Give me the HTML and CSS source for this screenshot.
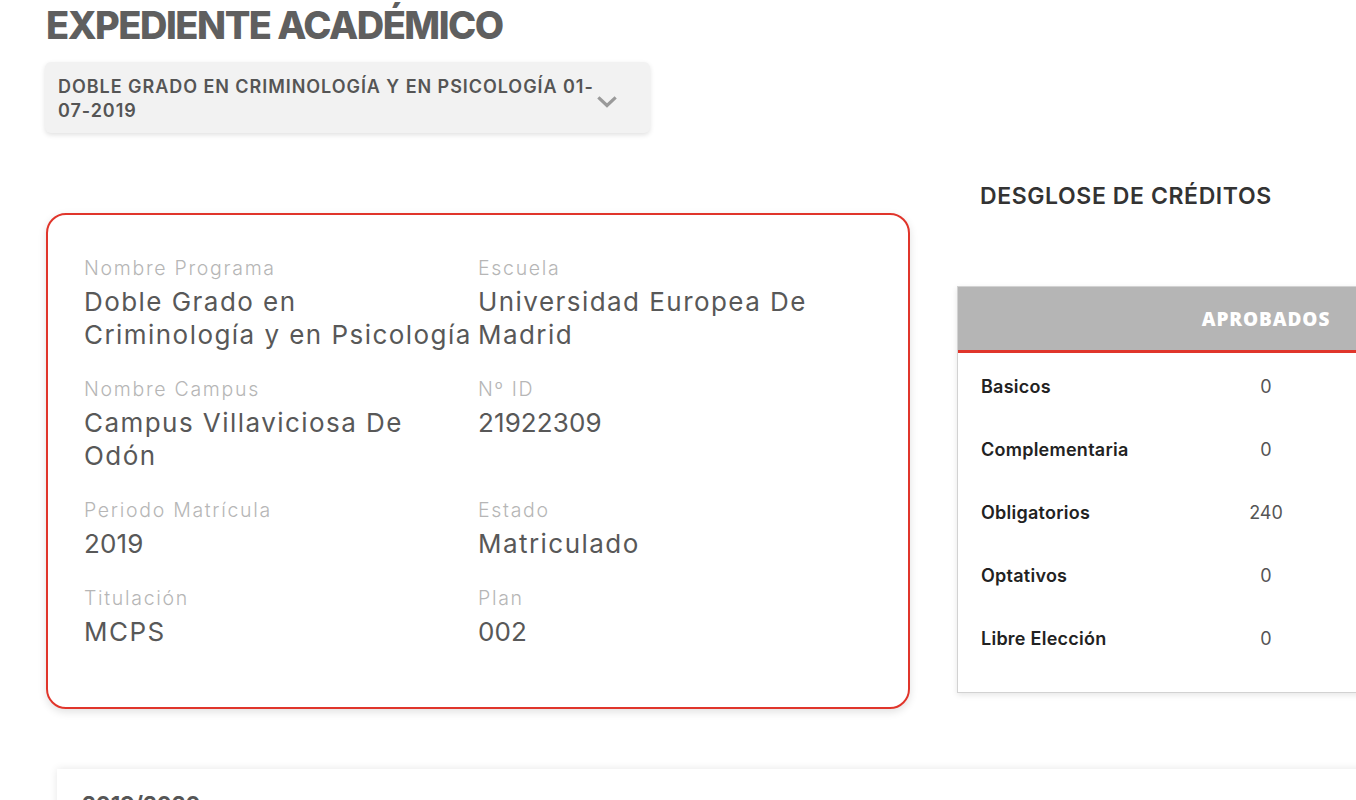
FILE: index.html
```html
<!DOCTYPE html>
<html lang="es">
<head>
<meta charset="utf-8">
<title>Expediente Académico</title>
<link rel="stylesheet" href="styles.css">
</head>
<body>
<main class="page">
  <h1 class="title">EXPEDIENTE ACADÉMICO</h1>
  <div class="select">
    <span class="select-text">DOBLE GRADO EN CRIMINOLOGÍA Y EN PSICOLOGÍA 01-07-2019</span>
    <svg class="chevron" width="20" height="12" viewBox="0 0 20 12" aria-hidden="true">
      <path d="M2.5 2.5 L10 9.5 L17.5 2.5" fill="none" stroke="#9a9a9a" stroke-width="3.2" stroke-linecap="square"/>
    </svg>
  </div>

  <div class="layout">
    <section class="info-card">
      <div class="field">
        <div class="label">Nombre Programa</div>
        <div class="value">Doble Grado en Criminología y en Psicología</div>
      </div>
      <div class="field">
        <div class="label">Escuela</div>
        <div class="value">Universidad Europea De Madrid</div>
      </div>
      <div class="field">
        <div class="label">Nombre Campus</div>
        <div class="value">Campus Villaviciosa De Odón</div>
      </div>
      <div class="field">
        <div class="label">Nº ID</div>
        <div class="value num">21922309</div>
      </div>
      <div class="field">
        <div class="label">Periodo Matrícula</div>
        <div class="value num">2019</div>
      </div>
      <div class="field">
        <div class="label">Estado</div>
        <div class="value">Matriculado</div>
      </div>
      <div class="field">
        <div class="label">Titulación</div>
        <div class="value">MCPS</div>
      </div>
      <div class="field">
        <div class="label">Plan</div>
        <div class="value num">002</div>
      </div>
    </section>

    <aside class="credits">
      <h2 class="credits-title">DESGLOSE DE CRÉDITOS</h2>
      <div class="credits-table">
        <div class="ct-head">
          <span class="ct-name"></span>
          <span class="ct-val">APROBADOS</span>
          <span class="ct-rest"></span>
        </div>
        <div class="ct-body">
          <div class="ct-row"><span class="ct-name">Basicos</span><span class="ct-val">0</span><span class="ct-rest"></span></div>
          <div class="ct-row"><span class="ct-name">Complementaria</span><span class="ct-val">0</span><span class="ct-rest"></span></div>
          <div class="ct-row"><span class="ct-name">Obligatorios</span><span class="ct-val">240</span><span class="ct-rest"></span></div>
          <div class="ct-row"><span class="ct-name">Optativos</span><span class="ct-val">0</span><span class="ct-rest"></span></div>
          <div class="ct-row"><span class="ct-name">Libre Elección</span><span class="ct-val">0</span><span class="ct-rest"></span></div>
        </div>
      </div>
    </aside>
  </div>

  <section class="year-card">
    <h3 class="year-title">2019/2020</h3>
  </section>
</main>
</body>
</html>
```
FILE: styles.css
```css
html, body {
  margin: 0;
  padding: 0;
  overflow: hidden;
  background: #ffffff;
}

body {
  font-family: "Inter", "Noto Sans", sans-serif;
  color: #555555;
}

.page {
  padding: 0 0 0 46px;
  width: 1400px;
}

.title {
  margin: 0;
  padding-top: 3px;
  font-family: "Inter", sans-serif;
  font-weight: 800;
  font-size: 38px;
  line-height: 44px;
  color: #5f5f5f;
  letter-spacing: -1.5px;
}

.select {
  margin: 15px 0 0 -1px;
  width: 605px;
  box-sizing: border-box;
  min-height: 71px;
  padding: 13px 35px 10px 13px;
  background: #f2f2f2;
  border-radius: 6px;
  box-shadow: 0 2px 5px rgba(0, 0, 0, 0.12);
  display: flex;
  align-items: flex-start;
}

.select-text {
  flex: 1;
  font-weight: 600;
  font-size: 18px;
  line-height: 24px;
  letter-spacing: 0.95px;
  color: #555555;
}

.chevron {
  flex: none;
  margin-top: 21px;
  margin-left: -6px;
  margin-right: -2px;
}

.layout {
  display: grid;
  grid-template-columns: 864px 1fr;
  column-gap: 47px;
  align-items: start;
}

.info-card {
  margin-top: 80px;
  border: 2px solid #e0352b;
  border-radius: 20px;
  padding: 39px 36px 59px;
  box-shadow: 0 3px 8px rgba(0, 0, 0, 0.12);
  display: grid;
  grid-template-columns: 394px 394px;
  row-gap: 24px;
}

.field {
  padding-right: 6px;
}

.label {
  font-weight: 300;
  font-size: 19.5px;
  line-height: 28px;
  letter-spacing: 1.7px;
  color: #b6b6b6;
  margin-bottom: 3px;
}

.value {
  font-weight: 400;
  font-size: 26px;
  line-height: 33px;
  letter-spacing: 1.45px;
  color: #585858;
}

.value.num {
  letter-spacing: 0.1px;
}

.credits-title {
  margin: 48px 0 0 23px;
  font-weight: 600;
  font-size: 23px;
  line-height: 30px;
  letter-spacing: 0.6px;
  color: #333333;
}

.credits-table {
  margin-top: 75px;
  width: 520px;
  border: 1px solid #d2d2d2;
  box-shadow: 0 2px 6px rgba(0, 0, 0, 0.1);
  background: #ffffff;
}

.ct-body {
  padding: 2px 0 22px;
}

.ct-head,
.ct-row {
  display: grid;
  grid-template-columns: 240px 136px 1fr;
  align-items: center;
}

.ct-head {
  height: 63px;
  background: #b5b5b5;
  border-bottom: 3px solid #e0352b;
}

.ct-head .ct-val {
  color: #ffffff;
  font-family: "Open Sans", sans-serif;
  font-weight: 800;
  font-size: 19px;
  letter-spacing: 0.9px;
  text-align: center;
}

.ct-row {
  height: 63px;
}

.ct-name {
  padding-left: 23px;
  font-weight: 600;
  font-size: 18px;
  letter-spacing: 0.25px;
  color: #222222;
}

.ct-row .ct-val {
  text-align: center;
  font-size: 18px;
  color: #555555;
}

.year-card {
  margin: 60px 0 0 11px;
  padding: 22px 25px;
  background: #ffffff;
  box-shadow: 0 0 8px rgba(0, 0, 0, 0.1);
}

.year-title {
  margin: 0;
  font-weight: 700;
  font-size: 22px;
  color: #555555;
}
```
